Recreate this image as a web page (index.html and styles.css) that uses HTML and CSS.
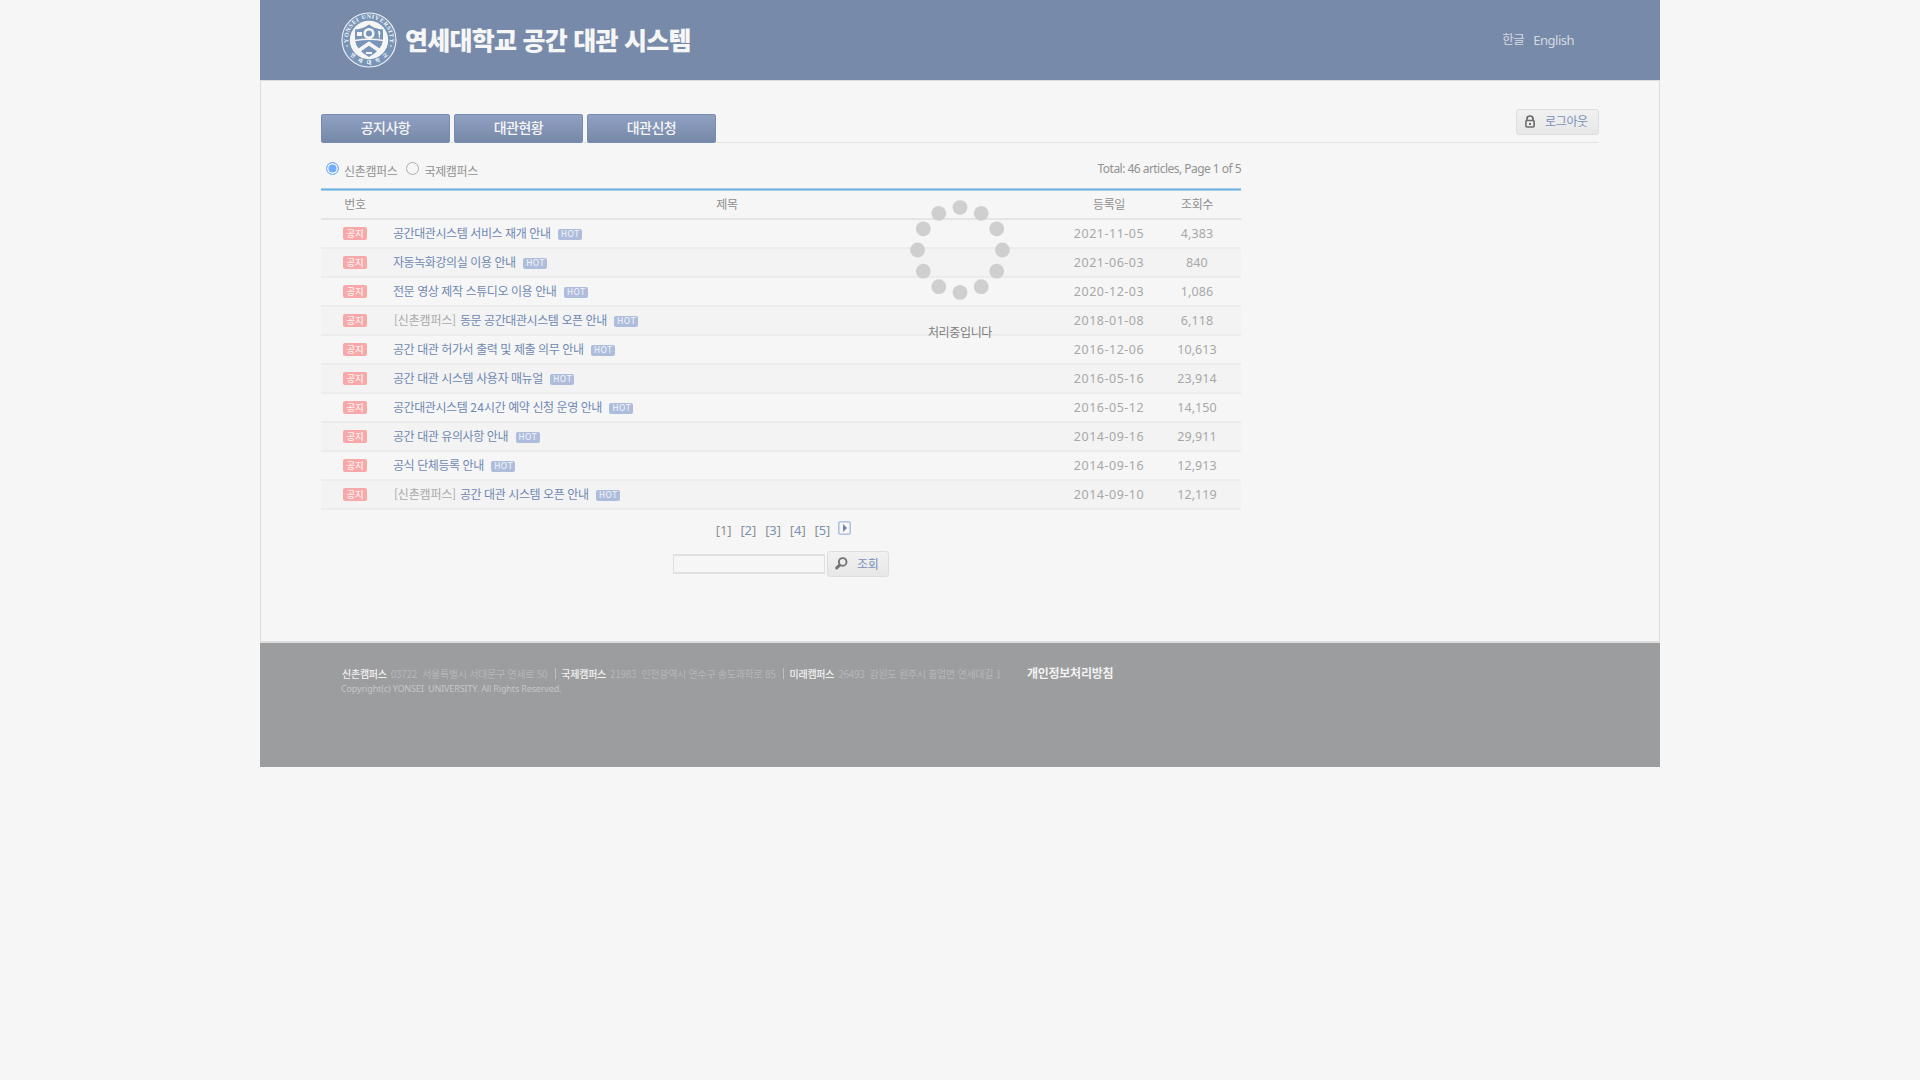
FILE: index.html
```html
<!DOCTYPE html>
<html lang="ko">
<head>
<meta charset="utf-8">
<title>연세대학교 공간 대관 시스템</title>
<link rel="stylesheet" href="styles.css">
</head>
<body>
<div class="wrap">
  <header class="header">
    <div class="brand">
      <svg class="seal" viewBox="0 0 56 56" width="56" height="56">
        <circle cx="28" cy="28" r="27" fill="#7895b8" stroke="#f0f2f5" stroke-width="1.1"/>
        <circle cx="28" cy="28" r="19.2" fill="#f6f6f6"/>
        <path d="M14 17.500Q22 17 28 12.500Q34 17 42 17.500V28Q41 38 28 45Q15 38 14 28Z" fill="#7895b8"/>
        <path d="M14 28.500Q28 26 42 28.500" fill="none" stroke="#f6f6f6" stroke-width="1.300"/>
        <circle cx="28" cy="21.500" r="4.300" fill="#7895b8" stroke="#f6f6f6" stroke-width="2.600"/>
        <path d="M16 20h5v4h-5zM37 19.500a1.500 2.500 0 1 1 1.800 4v3h-1v-3z" fill="#f6f6f6"/>
        <path d="M17 39L28 31.500 39 39" fill="none" stroke="#f6f6f6" stroke-width="3.800"/>
        <path d="M25 41h6" stroke="#f6f6f6" stroke-width="2"/>
        <path id="arcTop" d="M7.500 32A21 21 0 1 1 48.500 32" fill="none"/>
        <path id="arcBottom" d="M7 40.500A25 25 0 0 0 49 40.500" fill="none"/>
        <text class="seal-en"><textPath href="#arcTop" startOffset="50%" textLength="72">YONSEI UNIVERSITY</textPath></text>
        <text class="seal-ko"><textPath href="#arcBottom" startOffset="50%" textLength="43">연세대학교</textPath></text>
        <circle cx="6" cy="34" r=".8" fill="#f6f6f6"/><circle cx="50" cy="34" r=".8" fill="#f6f6f6"/>
      </svg>
      <h1 class="title">연세대학교 공간 대관 시스템</h1>
    </div>
    <div class="lang"><span class="lang-ko">한글</span><span>English</span></div>
  </header>

  <main class="body">
    <div class="navrow">
      <nav class="tabs"><a class="tab">공지사항</a><a class="tab">대관현황</a><a class="tab">대관신청</a></nav>
      <a class="btn logout">
        <svg width="10" height="13" viewBox="0 0 10 13"><path d="M2 6V3.500Q2 1 5 1T8 3.500V6" fill="none" stroke="#6b6b6b" stroke-width="1.700"/><rect x=".9" y="5.500" width="8.200" height="6.500" rx="1" fill="#eee" stroke="#6b6b6b" stroke-width="1.600"/><rect x="4" y="8" width="2" height="2" fill="#6b6b6b"/></svg>
        <span>로그아웃</span>
      </a>
    </div>

    <section class="board">
      <div class="filter">
        <div class="campus">
          <i class="radio on"></i><span class="c1">신촌캠퍼스</span>
          <i class="radio"></i><span>국제캠퍼스</span>
        </div>
        <div class="total">Total: 46 articles, Page 1 of 5</div>
      </div>
      <div class="table">
        <div class="row head"><span>번호</span><span>제목</span><span>등록일</span><span>조회수</span></div>
        <div class="row"><b class="notice">공지</b><div class="subject"><a>공간대관시스템 서비스 재개 안내</a><b class="hot">HOT</b></div><span class="num date">2021-11-05</span><span class="num">4,383</span></div>
        <div class="row"><b class="notice">공지</b><div class="subject"><a>자동녹화강의실 이용 안내</a><b class="hot">HOT</b></div><span class="num date">2021-06-03</span><span class="num">840</span></div>
        <div class="row"><b class="notice">공지</b><div class="subject"><a>전문 영상 제작 스튜디오 이용 안내</a><b class="hot">HOT</b></div><span class="num date">2020-12-03</span><span class="num">1,086</span></div>
        <div class="row"><b class="notice">공지</b><div class="subject"><em>[신촌캠퍼스]</em><a>동문 공간대관시스템 오픈 안내</a><b class="hot">HOT</b></div><span class="num date">2018-01-08</span><span class="num">6,118</span></div>
        <div class="row"><b class="notice">공지</b><div class="subject"><a>공간 대관 허가서 출력 및 제출 의무 안내</a><b class="hot">HOT</b></div><span class="num date">2016-12-06</span><span class="num">10,613</span></div>
        <div class="row"><b class="notice">공지</b><div class="subject"><a>공간 대관 시스템 사용자 매뉴얼</a><b class="hot">HOT</b></div><span class="num date">2016-05-16</span><span class="num">23,914</span></div>
        <div class="row"><b class="notice">공지</b><div class="subject"><a>공간대관시스템 <span class="digits">24</span>시간 예약 신청 운영 안내</a><b class="hot">HOT</b></div><span class="num date">2016-05-12</span><span class="num">14,150</span></div>
        <div class="row"><b class="notice">공지</b><div class="subject"><a>공간 대관 유의사항 안내</a><b class="hot">HOT</b></div><span class="num date">2014-09-16</span><span class="num">29,911</span></div>
        <div class="row"><b class="notice">공지</b><div class="subject"><a>공식 단체등록 안내</a><b class="hot">HOT</b></div><span class="num date">2014-09-16</span><span class="num">12,913</span></div>
        <div class="row"><b class="notice">공지</b><div class="subject"><em>[신촌캠퍼스]</em><a>공간 대관 시스템 오픈 안내</a><b class="hot">HOT</b></div><span class="num date">2014-09-10</span><span class="num">12,119</span></div>
      </div>
      <div class="pager">
        <span>[1]</span><span>[<a>2</a>]</span><span>[<a>3</a>]</span><span>[<a>4</a>]</span><span>[<a>5</a>]</span>
        <svg class="next" width="13" height="14" viewBox="0 0 13 14"><rect x=".75" y=".75" width="11.500" height="12.500" rx="2" fill="#f6f6f6" stroke="#b0bfde" stroke-width="1.500"/><path d="M5 3L9 7 5 11Z" fill="#6d86b0"/></svg>
      </div>
      <div class="search">
        <div class="field"></div>
        <a class="btn find">
          <svg width="13" height="13" viewBox="0 0 13 13"><circle cx="7.700" cy="4.900" r="3.800" fill="none" stroke="#747474" stroke-width="1.900"/><path d="M4.600 8.200L1.700 11" stroke="#747474" stroke-width="3" stroke-linecap="round"/></svg>
          <span>조회</span>
        </a>
      </div>
    </section>
  </main>

  <footer class="footer">
    <div class="addr">
      <div class="address"><b>신촌캠퍼스</b><span>03722  서울특별시 서대문구 연세로 50</span><i></i><b>국제캠퍼스</b><span>21983  인천광역시 연수구 송도과학로 85</span><i></i><b>미래캠퍼스</b><span>26493  강원도 원주시 흥업면 연세대길 1</span></div>
      <div class="copy">Copyright(c) YONSEI&nbsp; UNIVERSITY. All Rights Reserved.</div>
    </div>
    <a class="privacy">개인정보처리방침</a>
  </footer>
</div>

<div class="loading">
  <svg width="100" height="100" viewBox="-50 -50 100 100" fill="#cfcfcf">
    <circle cx="0" cy="-42.400" r="7.400"/><circle cx="21.200" cy="-36.700" r="7.400"/><circle cx="36.700" cy="-21.200" r="7.400"/><circle cx="42.400" cy="0" r="7.400"/><circle cx="36.700" cy="21.200" r="7.400"/><circle cx="21.200" cy="36.700" r="7.400"/><circle cx="0" cy="42.400" r="7.400"/><circle cx="-21.200" cy="36.700" r="7.400"/><circle cx="-36.700" cy="21.200" r="7.400"/><circle cx="-42.400" cy="0" r="7.400"/><circle cx="-36.700" cy="-21.200" r="7.400"/><circle cx="-21.200" cy="-36.700" r="7.400"/>
  </svg>
  <span>처리중입니다</span>
</div>
</body>
</html>
```
FILE: styles.css
```css
* { box-sizing: border-box; }
body {
  margin: 0;
  background: #f6f6f6;
  font: 12px/16px "Noto Sans CJK KR", sans-serif;
  letter-spacing: -.35px;
  color: #8f8f8f;
}
b, em, i { font-style: normal; }
svg { display: block; flex: none; }

.wrap { width: 1400px; margin: 0 auto; }

.header {
  height: 80px;
  padding: 0 86px 0 81px;
  display: flex;
  align-items: center;
  justify-content: space-between;
  background: #778aaa;
}
.brand { display: flex; align-items: center; gap: 8px; }
.title {
  margin: 0;
  padding-bottom: 2px;
  font-size: 25px;
  line-height: 30px;
  font-weight: 900;
  letter-spacing: -.75px;
  color: #f6f6f6;
  white-space: nowrap;
}
.seal-en { font: bold 6px "Liberation Serif", serif; fill: #f6f6f6; text-anchor: middle; letter-spacing: 0; }
.seal-ko { font: bold 5px "Noto Sans CJK KR", sans-serif; fill: #f6f6f6; text-anchor: middle; letter-spacing: 0; }
.lang { display: flex; gap: 9px; color: #d5d9e1; font: 13px/16px "Noto Sans", "Noto Sans CJK KR", sans-serif; letter-spacing: -.5px; }
.lang-ko { font-size: 12.5px; }

.body {
  height: 561px;
  padding: 28px 60px 0;
  border: 1px solid #dcdcdc;
  border-bottom: 0;
}
.navrow {
  height: 34px;
  display: flex;
  justify-content: space-between;
  align-items: flex-start;
  border-bottom: 1px solid #e2e2e2;
}
.tabs { display: flex; gap: 4px; padding-top: 5px; }
.tab {
  width: 129px;
  height: 29px;
  border: 1px solid #778cb2;
  border-radius: 2px;
  background: linear-gradient(#90a1c3, #7688a8);
  color: #f6f6f6;
  font-size: 14px;
  font-weight: 500;
  line-height: 24px;
  letter-spacing: -.5px;
  text-align: center;
}
.btn {
  height: 26px;
  display: flex;
  align-items: center;
  border: 1px solid #dedede;
  border-radius: 3px;
  background: linear-gradient(#f1f1f1, #e7e7e7);
  color: #7890b8;
}
.logout { width: 83px; padding: 0 0 2px 8px; gap: 10px; }

.board { width: 920px; }
.filter { height: 45px; display: flex; justify-content: space-between; padding-top: 17px; }
.campus { display: flex; padding-left: 5px; height: 20px; }
.radio { width: 13px; height: 13px; margin: 2px 5px 0 0; border: 1px solid #adadad; border-radius: 50%; }
.radio.on { border: 1px solid #72aefc; background: #72aefc; box-shadow: inset 0 0 0 1.5px #f6f6f6; }
.campus span { padding-top: 3px; color: #929292; }
.campus .c1 { margin-right: 9px; }
.total { color: #929292; font: 12px/16px "Noto Sans", sans-serif; letter-spacing: -.53px; padding-top: 1px; }

.table {
  padding-top: 2px;
  border-top: 1px solid #a3cfe8;
  box-shadow: inset 0 1px #6fb3de, inset 0 2px #a3cfe8;
}
.row {
  height: 29px;
  display: grid;
  grid-template-columns: 68px 676px 88px 88px;
  align-items: center;
  text-align: center;
  border-bottom: 2px solid #ececec;
}
.row.head { border-bottom-color: #e5e5e5; color: #8f8f8f; padding-bottom: 2px; }
.row:nth-child(odd) { background: #f3f3f3; }
.row.head { background: none; }
.notice {
  width: 24px;
  height: 13px;
  margin: 0 0 0 22px;
  border-radius: 2px;
  background: #f8a8a8;
  color: #fdf0f0;
  font-size: 9.5px;
  font-weight: 500;
  line-height: 12px;
  letter-spacing: -.2px;
}
.subject { display: flex; align-items: center; padding: 0 0 1px 4px; color: #6f88b2; letter-spacing: -.42px; }
.subject a { white-space: pre; }
.subject em { padding: 0 4px 0 1px; color: #aaa; letter-spacing: -.2px; }
.digits { letter-spacing: .2px; }
.hot {
  width: 24px;
  height: 11px;
  margin: 2px 0 0 7.5px;
  padding-left: 3px;
  border-radius: 2px;
  background: #afbddc;
  color: #f3f5fa;
  font: 8px/11px "DejaVu Sans", sans-serif;
  letter-spacing: .5px;
  text-align: left;
}
.num { color: #a8a8a8; font: 12.5px/16px "Noto Sans", sans-serif; letter-spacing: .1px; }
.date { letter-spacing: .5px; }

.pager { display: flex; justify-content: center; gap: 9px; padding: 11px 0 0 4px; font: 13px/18px "Noto Sans", sans-serif; letter-spacing: -.1px; }
.pager a { color: #7890b8; }
.next { margin: 0 -1px 0 -1px; }
.search { display: flex; gap: 2px; padding: 12px 0 0 352px; }
.field { width: 152px; height: 20px; margin-top: 3px; border: 2px solid #e0e0e0; border-left-width: 1px; border-right-width: 1px; }
.find { width: 62px; padding: 0 0 1px 7px; gap: 9px; }

.footer {
  height: 126px;
  border-top: 2px solid #dcdddc;
  padding: 22px 0 0 82px;
  display: flex;
  background: #9c9d9f;
}
.address { display: flex; height: 17px; font-size: 10px; color: #b6b7b8; white-space: pre; align-items: center; letter-spacing: -.28px; }
.address b { font-weight: 500; color: #f2f2f2; margin-right: 4px; letter-spacing: -.25px; }
.address i { width: 1px; height: 11px; background: #c0c0c0; margin: 0 5px 0 8px; }
.copy { margin-left: -1px; font: 9px/13px "Noto Sans", sans-serif; color: #c6c6c7; letter-spacing: -.14px; }
.privacy { margin-left: 26px; color: #f2f2f2; font-weight: 700; letter-spacing: -.25px; }

.loading {
  position: absolute;
  top: 200px;
  left: 50%;
  transform: translateX(-50%);
  display: flex;
  flex-direction: column;
  align-items: center;
  gap: 24px;
  color: #7c7c7c;
}
```
